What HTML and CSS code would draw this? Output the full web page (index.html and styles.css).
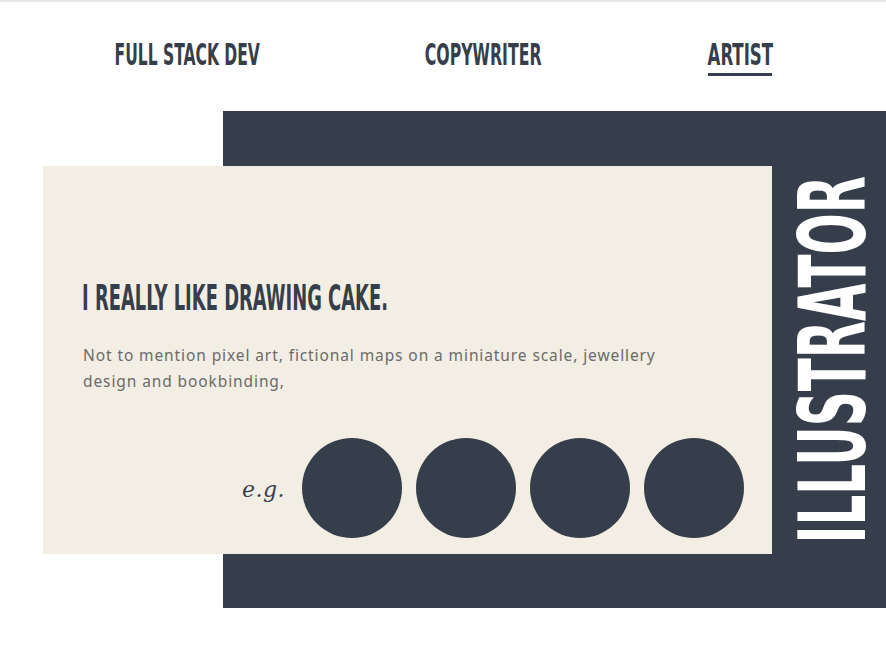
FILE: index.html
```html
<!DOCTYPE html>
<html lang="en">
<head>
<meta charset="utf-8">
<title>Artist</title>
<link rel="stylesheet" href="styles.css">
</head>
<body>
<nav class="nav">
  <a class="nav-item nav-full"><span class="cond">FULL STACK DEV</span></a>
  <a class="nav-item nav-copy"><span class="cond">COPYWRITER</span></a>
  <a class="nav-item nav-artist is-active"><span class="cond">ARTIST</span></a>
</nav>
<section class="panel">
  <div class="card">
    <h1 class="card-title"><span class="cond">I REALLY LIKE DRAWING CAKE.</span></h1>
    <p class="card-text">Not to mention pixel art, fictional maps on a miniature scale, jewellery design and bookbinding,</p>
    <div class="examples">
      <span class="eg">e.g.</span>
      <span class="dot"></span>
      <span class="dot"></span>
      <span class="dot"></span>
      <span class="dot"></span>
    </div>
  </div>
  <div class="side">
    <div class="side-label">ILLUSTRATOR</div>
  </div>
</section>
</body>
</html>
```

FILE: styles.css
```css
html, body {
  margin: 0;
  padding: 0;
  background: #ffffff;
}
body {
  border-top: 2px solid #e6e6e6;
  width: 886px;
  overflow: hidden;
  font-family: "Liberation Sans Narrow", "DejaVu Sans Condensed", "Liberation Sans", sans-serif;
}

.cond {
  display: inline-block;
  white-space: nowrap;
  transform-origin: center;
}

.nav {
  display: flex;
  justify-content: space-between;
  padding: 38px 114px 0 115px;
  height: 36px;
}
.nav-item {
  display: flex;
  justify-content: center;
  box-sizing: border-box;
  height: 36px;
  font-size: 30px;
  line-height: 30px;
  font-weight: bold;
  color: #373e4b;
  text-decoration: none;
  white-space: nowrap;
}
.nav-full { width: 144px; }
.nav-full .cond { transform: scaleX(0.576); }
.nav-copy { width: 115px; }
.nav-copy .cond { transform: scaleX(0.583); }
.nav-artist { width: 64px; }
.nav-artist .cond { transform: scaleX(0.614); }
.is-active {
  padding-bottom: 3px;
  border-bottom: 3px solid #373e4b;
}

.panel {
  display: flex;
  margin: 35px 0 0 223px;
  padding: 55px 0 54px;
  background: #373e4b;
}

.card {
  flex: none;
  box-sizing: border-box;
  width: 729px;
  height: 388px;
  margin-left: -180px;
  padding: 114px 28px 16px 39px;
  background: #f2eee3;
  display: flex;
  flex-direction: column;
}
.card-title {
  margin: 0;
  font-size: 36px;
  line-height: 36px;
  font-weight: bold;
  color: #373e4b;
  display: flex;
}
.card-title .cond {
  transform: scaleX(0.553);
  transform-origin: left center;
}
.card-text {
  margin: 26px 0 0 1px;
  max-width: 590px;
  font-family: "Noto Sans", "Open Sans", sans-serif;
  font-size: 15.5px;
  line-height: 26px;
  letter-spacing: 0.9px;
  color: #6b6b6b;
}
.examples {
  margin-top: 44px;
  display: flex;
  align-items: center;
  justify-content: flex-end;
  gap: 14px;
}
.eg {
  margin-right: 3px;
  font-family: "DejaVu Serif", "Liberation Serif", serif;
  font-style: italic;
  font-size: 22px;
  letter-spacing: 0.5px;
  color: #3a4150;
  position: relative;
  top: 1px;
}
.dot {
  width: 100px;
  height: 100px;
  border-radius: 50%;
  background: #373e4b;
}

.side {
  flex: 1;
  contain: size;
  display: flex;
  flex-direction: column;
  justify-content: center;
  padding-left: 16px;
}
.side-label {
  writing-mode: vertical-rl;
  transform: rotate(180deg) scaleY(0.586);
  white-space: nowrap;
  font-size: 92px;
  line-height: 92px;
  font-weight: bold;
  color: #ffffff;
  width: 92px;
}
```
